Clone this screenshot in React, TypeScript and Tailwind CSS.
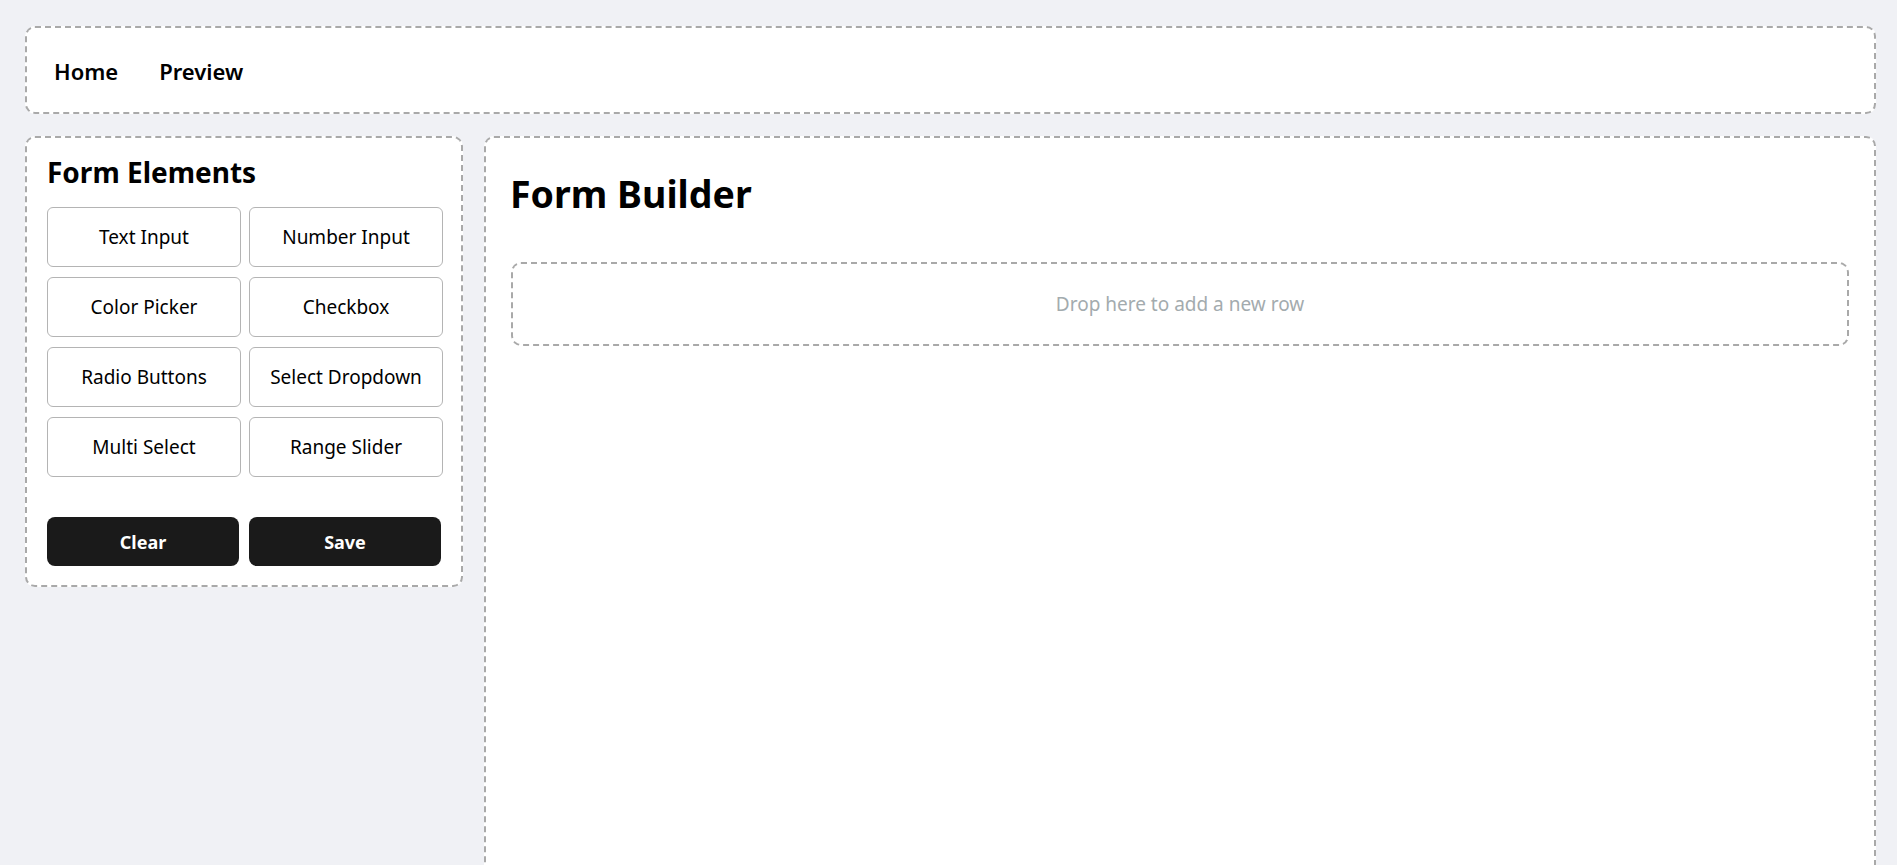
import React from 'react';

const elements = [
  'Text Input',
  'Number Input',
  'Color Picker',
  'Checkbox',
  'Radio Buttons',
  'Select Dropdown',
  'Multi Select',
  'Range Slider',
];

const font = { fontFamily: '"Noto Sans", "Open Sans", sans-serif' };

export default function App() {
  return (
    <div
      style={font}
      className="min-h-screen w-full bg-[#f0f1f5] pt-[26px] pl-[25px] pr-[21px] flex flex-col gap-[22px] text-black"
    >
      {/* NAV */}
      <nav className="h-[88px] bg-white border-2 border-dashed border-[#a9a9a9] rounded-[10px] flex items-center gap-[41px] pl-[27px] pt-[2px]">
        <a className="text-[22px] font-semibold leading-none cursor-pointer">Home</a>
        <a className="text-[22px] font-semibold leading-none cursor-pointer">Preview</a>
      </nav>

      <div className="flex items-start gap-[21px]">
        {/* SIDEBAR */}
        <aside className="w-[438px] shrink-0 bg-white border-2 border-dashed border-[#a9a9a9] rounded-[10px] pt-[17px] pb-[19px] pl-[20px] pr-[18px]">
          <h2 className="text-[28px] font-bold leading-[34px]">Form Elements</h2>
          <div className="mt-[18px] grid grid-cols-[194px_194px] gap-x-[8px] gap-y-[10px]">
            {elements.map(el => (
              <button
                key={el}
                className="h-[60px] bg-white border border-[#b4b4b4] rounded-[6px] pt-[1px] text-[19px] text-black"
              >
                {el}
              </button>
            ))}
          </div>
          <div className="mt-[40px] grid grid-cols-[192px_192px] gap-x-[10px]">
            <button className="h-[49px] bg-[#1a1a1a] text-white rounded-[8px] pt-[1px] text-[18px] font-bold">Clear</button>
            <button className="h-[49px] bg-[#1a1a1a] text-white rounded-[8px] pt-[1px] text-[18px] font-bold">Save</button>
          </div>
        </aside>

        {/* MAIN */}
        <main className="flex-1 h-[900px] bg-white border-2 border-dashed border-[#a9a9a9] rounded-[10px] pt-[32px] px-[25px]">
          <h1 className="text-[37.5px] font-bold leading-[48px] -ml-[1px]">Form Builder</h1>
          <div className="mt-[44px] h-[84px] border-2 border-dashed border-[#a9a9a9] rounded-[10px] flex items-center justify-center">
            <span className="text-[19px] text-[#a3abae]">Drop here to add a new row</span>
          </div>
        </main>
      </div>
    </div>
  );
}
